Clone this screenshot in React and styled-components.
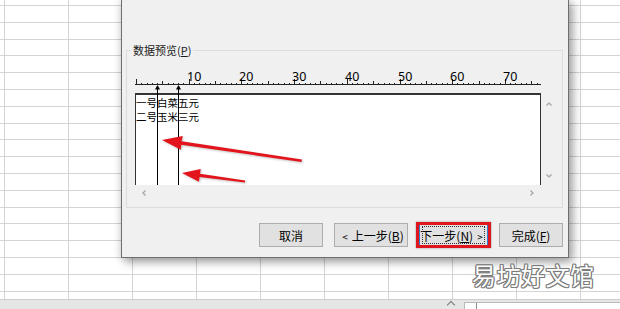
import styled, { createGlobalStyle, css } from "styled-components";

const GlobalStyle = createGlobalStyle`
  html, body {
    margin: 0;
    padding: 0;
    background: #fff;
  }
  body {
    font-family: "Noto Sans CJK SC", "Noto Sans", sans-serif;
  }
`

const Page = styled.div`
  position: relative;
  width: 620px;
  height: 309px;
  overflow: hidden;
  display: flex;
  flex-direction: column;
`

const Sheet = styled.div`
  height: 299px;
  flex: none;
  overflow: hidden;
  background-color: #fff;
  background-image: repeating-linear-gradient(90deg, #d4d4d4 0 1px, transparent 1px 64px);
  background-position: 4px 0;
`

const GridRow = styled.div`
  box-sizing: border-box;
  height: ${props => props.$h}px;
  border-bottom: 1px solid #d4d4d4;
`

const BottomBar = styled.div`
  flex: 1;
  display: flex;
  align-items: stretch;
  background: #e6e6e6;
  border-top: 1px solid #cdcdcd;
`

const AddMark = styled.div`
  margin: 2px 0 0 448px;
  width: 5px;
  height: 5px;
  border-left: 1px solid #777;
  border-top: 1px solid #777;
  transform: rotate(45deg);
`

const ScrollField = styled.div`
  margin: 2px 0 0 10px;
  flex: 1;
  background: #fff;
  border-left: 1px solid #b9b9b9;
  border-top: 1px solid #b9b9b9;
  padding-left: 11px;
`

const ScrollGrip = styled.div`
  width: 1px;
  height: 100%;
  background: #8c8c8c;
`

const Dialog = styled.div`
  position: absolute;
  left: 121px;
  top: -1px;
  width: 448px;
  box-sizing: border-box;
  padding: 44px 5px 10px 4px;
  background: #f0f0f0;
  border: 1px solid #6f6f6f;
  box-shadow: 4px 4px 9px rgba(0, 0, 0, 0.35), -1px 1px 8px rgba(0, 0, 0, 0.12);
`

const GroupBox = styled.fieldset`
  margin: 0;
  min-width: 0;
  padding: 0 0 7px 4px;
  border: 1px solid #dcdcdc;
`

const GroupLabel = styled.legend`
  padding: 0 2px;
  font-size: 11px;
  line-height: 12px;
  color: #1a1a1a;
`

const Key = styled.span`
  text-decoration: underline;
  text-underline-offset: 1px;
`

const Preview = styled.div`
  position: relative;
  margin: 10px 0 0 4px;
  width: 421px;
`

const Ruler = styled.svg`
  display: block;
  width: 406px;
  height: 27px;
`

const BoxRow = styled.div`
  display: flex;
`

const TextBox = styled.div`
  box-sizing: border-box;
  width: 406px;
  height: 92px;
  padding-top: 1px;
  background: #fff;
  border: 1px solid #333;
  border-top-width: 2px;
  border-bottom: none;
  font-size: 10.5px;
  line-height: 14px;
  color: #000;
  white-space: pre;
`

const VScroll = styled.div`
  box-sizing: border-box;
  width: 15px;
  height: 92px;
  padding: 7px 0 5px;
  display: flex;
  flex-direction: column;
  align-items: center;
  justify-content: space-between;
`

const HScroll = styled.div`
  box-sizing: border-box;
  width: 406px;
  height: 15px;
  padding: 0 5px;
  display: flex;
  align-items: center;
  justify-content: space-between;
`

const BreakMarker = styled.svg`
  position: absolute;
  top: 19px;
  left: ${props => props.$left}px;
  width: 5px;
  height: 100px;
`

const ButtonRow = styled.div`
  margin-top: 15px;
  display: flex;
  justify-content: flex-end;
  gap: 11px;
`

const Button = styled.button`
  position: relative;
  box-sizing: border-box;
  width: ${props => props.$w}px;
  height: 24px;
  padding: 0;
  border: 1px solid #adadad;
  background: #e1e1e1;
  font-family: "Noto Sans CJK SC", "Noto Sans", sans-serif;
  font-size: 12px;
  color: #000;
  ${props => props.$focused && css`
    border-color: #2f7fd0;
    &::after {
      content: "";
      position: absolute;
      inset: 2px;
      border: 1px dotted #333;
    }
    &::before {
      content: "";
      position: absolute;
      top: -2px;
      bottom: -2px;
      left: -4px;
      right: -4px;
      border: 3px solid #e0161e;
      box-shadow: 0 0 2px rgba(0, 0, 0, 0.35);
    }
  `}
`

const Lt = styled.span`
  font-size: 10px;
  margin: 0 4px;
`

const Watermark = styled.div`
  position: absolute;
  left: 472px;
  top: 259px;
  font-size: 24px;
  line-height: 32px;
  letter-spacing: 0.5px;
  color: #fff;
  text-shadow:
    1px 0 0 #7c7c7c, -1px 0 0 #7c7c7c, 0 1px 0 #7c7c7c, 0 -1px 0 #7c7c7c,
    1px 1px 0 #7c7c7c, -1px -1px 0 #7c7c7c, 1px -1px 0 #7c7c7c, -1px 1px 0 #7c7c7c;
`

const Annotations = styled.svg`
  position: absolute;
  left: 0;
  top: 0;
  width: 620px;
  height: 309px;
  pointer-events: none;
  filter: drop-shadow(1px 1px 1px rgba(0, 0, 0, 0.25));
`

const UNIT = 5.27

const rowLines = Array.from({ length: 18 }, (_, k) => Math.round(5 + 16.8 * k))
const rowHeights = rowLines.map((y, i) => (i === 0 ? y + 1 : y - rowLines[i - 1]))

function Chevron ({ dir }) {
  const rot = { up: 0, right: 90, down: 180, left: 270 }[dir]
  return (
    <svg width="8" height="8" viewBox="0 0 8 8">
      <polyline
        points="1.5,5.5 4,3 6.5,5.5"
        fill="none"
        stroke="#a3a3a3"
        strokeWidth="1.2"
        transform={`rotate(${rot} 4 4)`}
      />
    </svg>
  )
}

function RulerDrawing () {
  const ticks = []
  for (let i = 0; i <= 76; i++) {
    const x = Math.round(1 + i * UNIT) + 0.5
    const h = i % 10 === 0 ? 5 : i % 5 === 0 ? 3 : 1
    ticks.push(<line key={i} x1={x} x2={x} y1={18} y2={18 - h} stroke="#222" strokeWidth="1" />)
    if (i % 10 === 0 && i > 0) {
      ticks.push(
        <text key={`t${i}`} x={x - 2.5} y={15} fontSize="12.5" fontFamily="'Noto Sans', sans-serif" fill="#000">
          {i}
        </text>
      )
    }
  }
  return (
    <Ruler viewBox="0 0 406 27">
      <line x1="0" x2="406" y1="18.5" y2="18.5" stroke="#222" strokeWidth="1" />
      {ticks}
    </Ruler>
  )
}

function Marker ({ col }) {
  return (
    <BreakMarker $left={Math.round(1 + col * UNIT) - 2} viewBox="0 0 5 100">
      <polygon points="2.5,0 0,4.5 5,4.5" fill="#000" />
      <line x1="2.5" x2="2.5" y1="2" y2="100" stroke="#000" strokeWidth="1" />
    </BreakMarker>
  )
}

function App () {
  return (
    <Page>
      <GlobalStyle />
      <Sheet>
        {rowHeights.map((h, i) => <GridRow key={i} $h={h} />)}
      </Sheet>
      <BottomBar>
        <AddMark />
        <ScrollField>
          <ScrollGrip />
        </ScrollField>
      </BottomBar>

      <Dialog>
        <GroupBox>
          <GroupLabel>数据预览(<Key>P</Key>)</GroupLabel>
          <Preview>
            <RulerDrawing />
            <BoxRow>
              <TextBox>{'一号白菜五元\n二号玉米三元'}</TextBox>
              <VScroll>
                <Chevron dir="up" />
                <Chevron dir="down" />
              </VScroll>
            </BoxRow>
            <HScroll>
              <Chevron dir="left" />
              <Chevron dir="right" />
            </HScroll>
            <Marker col={4} />
            <Marker col={8} />
          </Preview>
        </GroupBox>
        <ButtonRow>
          <Button $w={64}>取消</Button>
          <Button $w={74}><Lt>&lt;</Lt>上一步(<Key>B</Key>)</Button>
          <Button $w={69} $focused>下一步(<Key>N</Key>)<Lt>&gt;</Lt></Button>
          <Button $w={64}>完成(<Key>F</Key>)</Button>
        </ButtonRow>
      </Dialog>

      <Annotations viewBox="0 0 620 309">
        <polygon points="162,140 182.8,136 181.5,141.2 301.9,159.4 301.5,161.9 181.3,144.7 180.8,149.8" fill="#e3141b" />
        <polygon points="182,173 200.7,169 200,173.8 245.1,180.4 244.9,182.6 199.6,177 198.9,181.8" fill="#e3141b" />
      </Annotations>

      <Watermark>易坊好文馆</Watermark>
    </Page>
  )
}

export default App
